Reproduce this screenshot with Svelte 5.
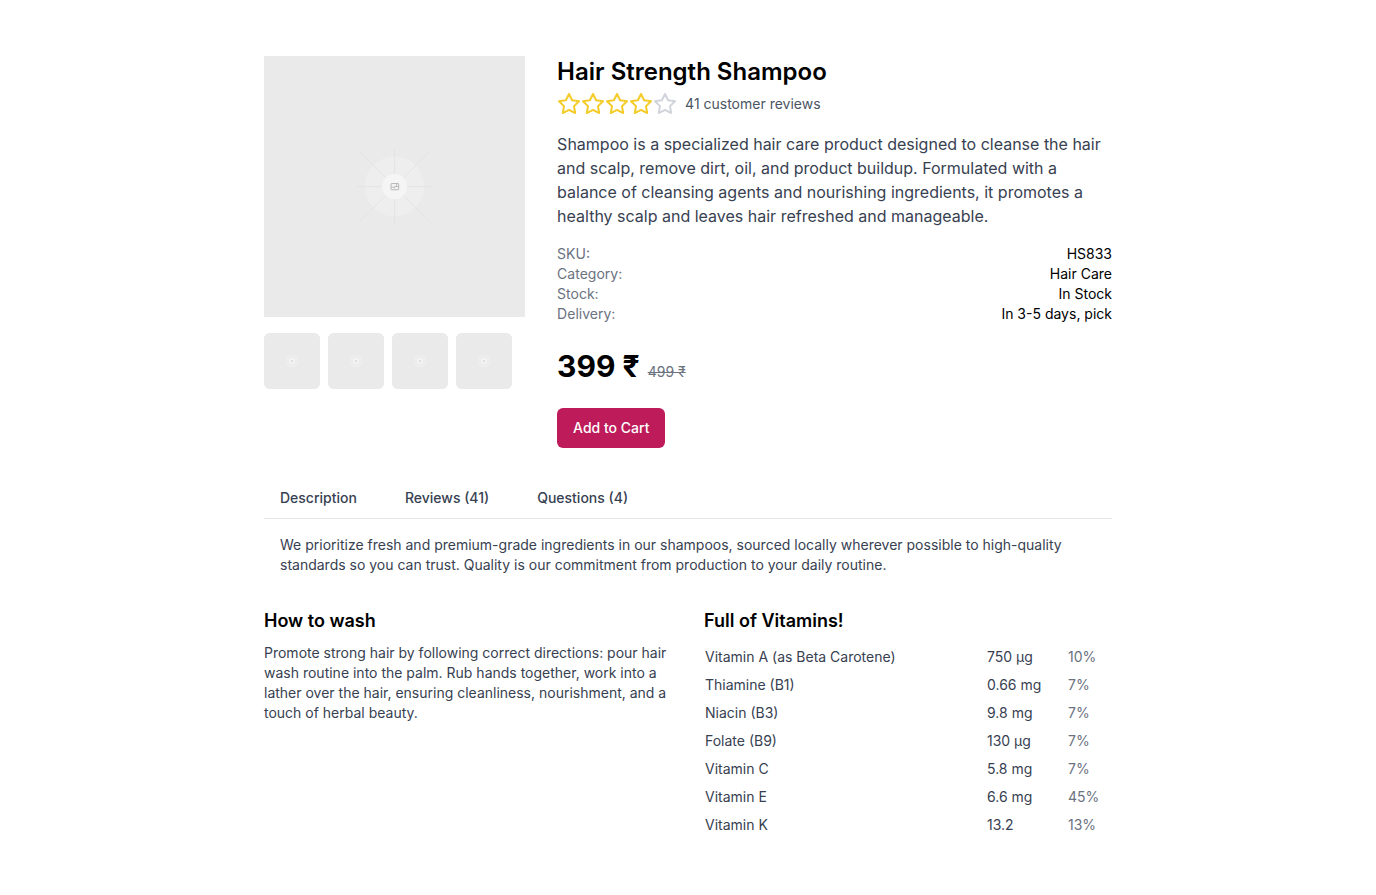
<script>
  const stars = [true, true, true, true, false];
  const thumbs = [1, 2, 3, 4];
  const details = [
    ['SKU:', 'HS833'],
    ['Category:', 'Hair Care'],
    ['Stock:', 'In Stock'],
    ['Delivery:', 'In 3-5 days, pick'],
  ];
  const tabs = ['Description', 'Reviews (41)', 'Questions (4)'];
  const vitamins = [
    ['Vitamin A (as Beta Carotene)', '750 µg', '10%'],
    ['Thiamine (B1)', '0.66 mg', '7%'],
    ['Niacin (B3)', '9.8 mg', '7%'],
    ['Folate (B9)', '130 µg', '7%'],
    ['Vitamin C', '5.8 mg', '7%'],
    ['Vitamin E', '6.6 mg', '45%'],
    ['Vitamin K', '13.2', '13%'],
  ];
</script>

{#snippet placeholder()}
  <svg class="placeholder" viewBox="0 0 261 261" fill="none" aria-hidden="true">
    <rect width="261" height="261" fill="#eaeaea" />
    <circle cx="130.5" cy="130.5" r="30" fill="#eeeeee" />
    <g stroke="#e3e3e3" stroke-width="0.9">
      <path d="M130.5 93v75M93 130.5h75" />
      <path d="M95 95l71 71M166 95l-71 71" />
    </g>
    <circle cx="130.5" cy="130.5" r="12.5" fill="#f5f5f5" />
    <g stroke="#b0b0b0" stroke-width="0.9">
      <rect x="127" y="127.5" width="7.6" height="6.2" rx="0.4" />
      <path d="M127 131h2.2l1.3 1.3M130.5 132.3v-1.8h4.1M132.5 127.5v3" stroke-width="0.8" />
    </g>
  </svg>
{/snippet}

<main>
  <section class="product">
    <div class="gallery">
      <div class="photo">{@render placeholder()}</div>
      <div class="thumbs">
        {#each thumbs as n (n)}
          <button class="thumb" type="button" aria-label="Show image {n}">{@render placeholder()}</button>
        {/each}
      </div>
    </div>
    <div class="info">
      <h1>Hair Strength Shampoo</h1>
      <div class="rating">
        <div class="stars">
          {#each stars as on}
            <svg class="star" class:on viewBox="0 0 24 24" fill="none" stroke="currentColor" stroke-width="2" stroke-linecap="round" stroke-linejoin="round" aria-hidden="true">
              <path d="M12 2l3.09 6.26L22 9.27l-5 4.87 1.18 6.88L12 17.77l-6.18 3.25L7 14.14 2 9.27l6.91-1.01L12 2z" />
            </svg>
          {/each}
        </div>
        <span>41 customer reviews</span>
      </div>
      <p class="lead">
        Shampoo is a specialized hair care product designed to cleanse the hair and scalp, remove dirt,
        oil, and product buildup. Formulated with a balance of cleansing agents and nourishing
        ingredients, it promotes a healthy scalp and leaves hair refreshed and manageable.
      </p>
      <dl>
        {#each details as [label, value]}
          <div class="detail"><dt>{label}</dt><dd>{value}</dd></div>
        {/each}
      </dl>
      <div class="price"><strong>399 ₹</strong><s>499 ₹</s></div>
      <button class="cart" type="button">Add to Cart</button>
    </div>
  </section>

  <nav>
    {#each tabs as tab}
      <button class="tab" type="button">{tab}</button>
    {/each}
  </nav>
  <p class="panel">
    We prioritize fresh and premium-grade ingredients in our shampoos, sourced locally wherever possible
    to high-quality standards so you can trust. Quality is our commitment from production to your daily
    routine.
  </p>

  <div class="columns">
    <section>
      <h2>How to wash</h2>
      <p class="wash">
        Promote strong hair by following correct directions: pour hair wash routine into the palm. Rub
        hands together, work into a lather over the hair, ensuring cleanliness, nourishment, and a touch
        of herbal beauty.
      </p>
    </section>
    <section>
      <h2>Full of Vitamins!</h2>
      <table>
        <tbody>
          {#each vitamins as [name, amount, share]}
            <tr><td>{name}</td><td class="amount">{amount}</td><td class="share">{share}</td></tr>
          {/each}
        </tbody>
      </table>
    </section>
  </div>
</main>

<style>
  :global(body) {
    margin: 0;
    background: #fff;
  }
  main {
    box-sizing: border-box;
    max-width: 896px;
    margin: 0 auto;
    padding: 56px 24px;
    font-family: Inter, 'Liberation Sans', sans-serif;
    font-size: 14px;
    line-height: 20px;
    color: #000;
  }
  h1, h2, p, dl, dd {
    margin: 0;
  }
  button {
    font: inherit;
    border: 0;
    cursor: pointer;
  }
  .product {
    display: grid;
    grid-template-columns: 8fr 17fr;
    gap: 32px;
    align-items: start;
  }
  .placeholder {
    display: block;
    width: 100%;
    height: 100%;
  }
  .photo {
    aspect-ratio: 1;
    background: #eaeaea;
  }
  .thumbs {
    display: flex;
    gap: 8px;
    margin-top: 16px;
  }
  .thumb {
    width: 56px;
    height: 56px;
    padding: 0;
    border-radius: 6px;
    overflow: hidden;
    background: #eaeaea;
  }
  h1 {
    font-size: 24px;
    line-height: 32px;
    font-weight: 600;
  }
  .rating {
    display: flex;
    align-items: center;
    gap: 8px;
    margin-top: 4px;
    color: #4b5563;
  }
  .stars {
    display: flex;
  }
  .star {
    width: 24px;
    height: 24px;
    color: #d1d5db;
  }
  .star.on {
    color: #f3cc2a;
  }
  .lead {
    margin-top: 16px;
    font-size: 16px;
    line-height: 24px;
    color: #374151;
  }
  dl {
    margin-top: 16px;
  }
  .detail {
    display: flex;
    justify-content: space-between;
  }
  dt {
    color: #6b7280;
  }
  .price {
    display: flex;
    align-items: baseline;
    gap: 8px;
    margin-top: 24px;
  }
  .price strong {
    font-size: 30px;
    line-height: 36px;
    font-weight: 700;
  }
  .price s {
    color: #6b7280;
  }
  .cart {
    margin-top: 24px;
    padding: 10px 16px;
    border-radius: 6px;
    background: #be1b5a;
    color: #fff;
    font-weight: 500;
  }
  nav {
    display: flex;
    gap: 16px;
    margin-top: 32px;
    border-bottom: 1px solid #e5e7eb;
  }
  .tab {
    padding: 8px 16px;
    border-bottom: 2px solid transparent;
    background: none;
    color: #374151;
    font-weight: 500;
  }
  .panel {
    padding: 16px;
    color: #374151;
  }
  .columns {
    display: grid;
    grid-template-columns: 1fr 1fr;
    gap: 32px;
    margin-top: 16px;
  }
  h2 {
    margin-bottom: 8px;
    font-size: 18px;
    line-height: 28px;
    font-weight: 600;
  }
  .wash {
    color: #374151;
  }
  table {
    width: 100%;
    border-collapse: collapse;
    table-layout: fixed;
    color: #374151;
  }
  td {
    box-sizing: border-box;
    padding: 4px 1px;
  }
  .amount {
    width: 81px;
  }
  .share {
    width: 45px;
    color: #6b7280;
  }
</style>
